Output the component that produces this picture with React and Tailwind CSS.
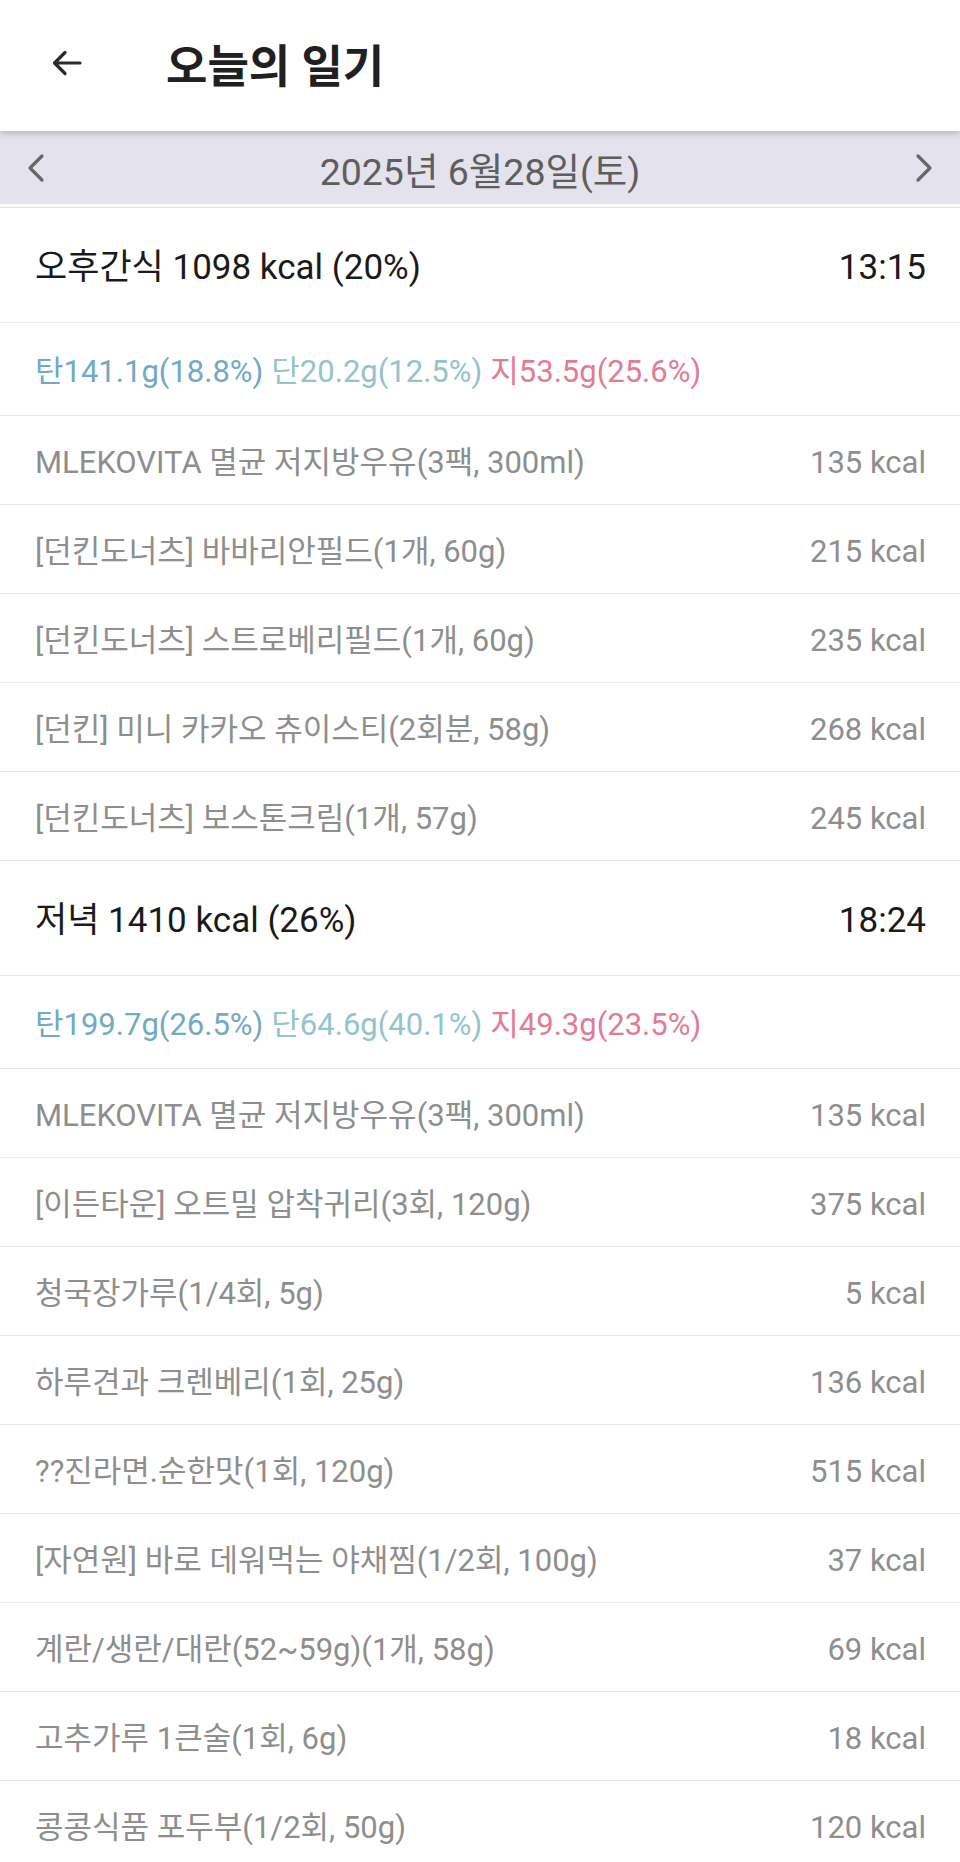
import React from "react";

const meals = [
  {
    title: "오후간식 1098 kcal (20%)",
    time: "13:15",
    carb: "탄141.1g(18.8%)",
    protein: "단20.2g(12.5%)",
    fat: "지53.5g(25.6%)",
    items: [
      ["MLEKOVITA 멸균 저지방우유(3팩, 300ml)", "135 kcal"],
      ["[던킨도너츠] 바바리안필드(1개, 60g)", "215 kcal"],
      ["[던킨도너츠] 스트로베리필드(1개, 60g)", "235 kcal"],
      ["[던킨] 미니 카카오 츄이스티(2회분, 58g)", "268 kcal"],
      ["[던킨도너츠] 보스톤크림(1개, 57g)", "245 kcal"],
    ],
  },
  {
    title: "저녁 1410 kcal (26%)",
    time: "18:24",
    carb: "탄199.7g(26.5%)",
    protein: "단64.6g(40.1%)",
    fat: "지49.3g(23.5%)",
    items: [
      ["MLEKOVITA 멸균 저지방우유(3팩, 300ml)", "135 kcal"],
      ["[이든타운] 오트밀 압착귀리(3회, 120g)", "375 kcal"],
      ["청국장가루(1/4회, 5g)", "5 kcal"],
      ["하루견과 크렌베리(1회, 25g)", "136 kcal"],
      ["??진라면.순한맛(1회, 120g)", "515 kcal"],
      ["[자연원] 바로 데워먹는 야채찜(1/2회, 100g)", "37 kcal"],
      ["계란/생란/대란(52~59g)(1개, 58g)", "69 kcal"],
      ["고추가루 1큰술(1회, 6g)", "18 kcal"],
      ["콩콩식품 포두부(1/2회, 50g)", "120 kcal"],
    ],
  },
];

const Chevron = ({ dir }) => (
  <svg width="20" height="30" viewBox="0 0 20 30" fill="none">
    <path
      d={dir === "left" ? "M16 3 L4 15 L16 27" : "M4 3 L16 15 L4 27"}
      stroke="#676767"
      strokeWidth="3.2"
      strokeLinecap="round"
      strokeLinejoin="round"
    />
  </svg>
);

const MealSection = ({ meal }) => (
  <div>
    {/* meal header */}
    <div className="h-[115px] flex items-center justify-between pl-[35px] pr-[34px] pt-[7px] border-b border-[#e8e8e8] text-[35px] text-[#1a1a1a]">
      <span>{meal.title}</span>
      <span>{meal.time}</span>
    </div>
    {/* macros */}
    <div className="h-[93px] flex items-center gap-[8px] pl-[35px] pt-[7px] border-b border-[#e8e8e8] text-[31px]">
      <span className="text-[#72a9c3]">{meal.carb}</span>
      <span className="text-[#94c3cb]">{meal.protein}</span>
      <span className="text-[#e07d93]">{meal.fat}</span>
    </div>
    {/* food list */}
    {meal.items.map(([name, kcal], i) => (
      <div
        key={i}
        className="h-[89px] flex items-center justify-between pl-[35px] pr-[34px] pt-[7px] border-b border-[#e8e8e8] text-[31px] text-[#8e8e8e]"
      >
        <span>{name}</span>
        <span>{kcal}</span>
      </div>
    ))}
  </div>
);

export default function App() {
  return (
    <div className="w-[960px] h-[1862px] overflow-hidden bg-white font-[Roboto,'Noto_Sans_CJK_KR',sans-serif]">
      {/* top bar */}
      <div className="relative z-10 h-[131px] flex items-center pl-[52px] bg-white shadow-[0_3px_6px_rgba(0,0,0,0.18)]">
        <svg width="30" height="26" viewBox="0 0 30 26" fill="none" className="-mt-[6px]">
          <path
            d="M28 13 H3 M13 2.5 L2.5 13 L13 23.5"
            stroke="#2a2a2a"
            strokeWidth="3.2"
            strokeLinecap="round"
            strokeLinejoin="round"
          />
        </svg>
        <h1 className="ml-[84px] pt-[4px] text-[45px] font-bold text-[#202020]">오늘의 일기</h1>
      </div>

      {/* date selector */}
      <div className="h-[73px] flex items-center justify-between px-[26px] bg-[#e4e2ec]">
        <Chevron dir="left" />
        <span className="text-[37.5px] text-[#5e5e5e] pt-[10px]">2025년 6월28일(토)</span>
        <Chevron dir="right" />
      </div>
      <div className="h-[4px] border-b border-[#e2e2e2]" />

      {meals.map((m, i) => (
        <MealSection key={i} meal={m} />
      ))}
    </div>
  );
}
